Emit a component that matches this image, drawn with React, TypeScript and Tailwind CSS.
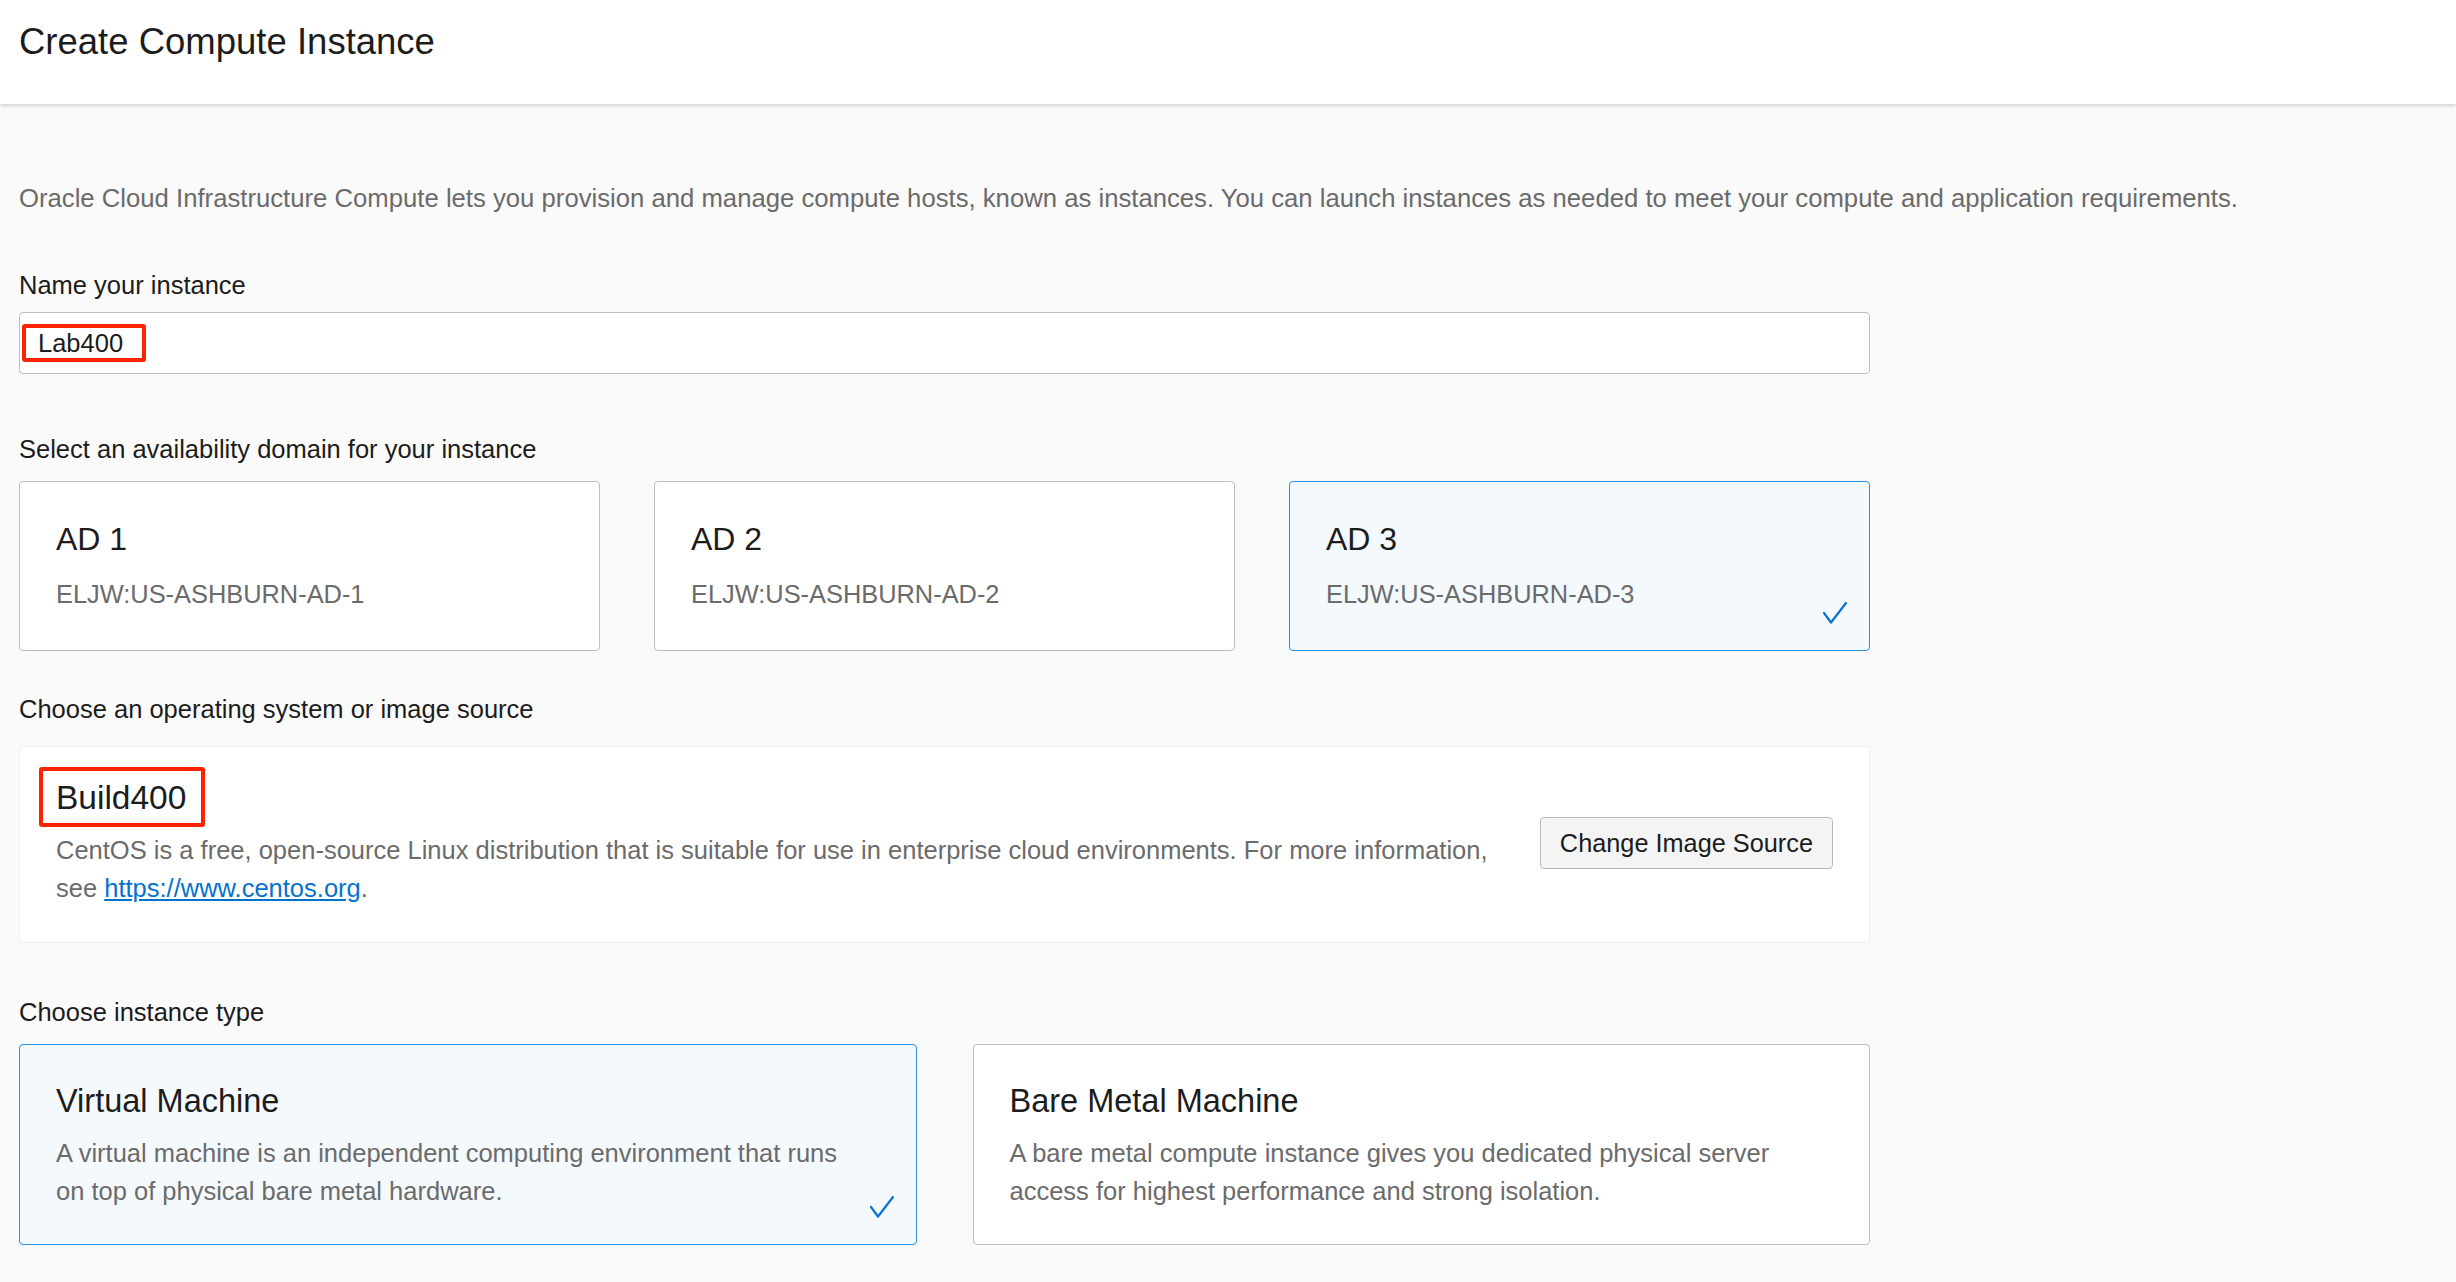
import React from "react";

const Check = () => (
  <svg width="24" height="22" viewBox="0 0 24 22" fill="none" className="absolute right-[22px] bottom-[26px]">
    <polyline points="1,11 8,20.5 23,1" stroke="#0a72cf" strokeWidth="2.2" strokeLinecap="round" strokeLinejoin="round" />
  </svg>
);

function AdCard({ title, sub, selected }: { title: string; sub: string; selected?: boolean }) {
  return (
    <div
      className={
        selected
          ? "relative h-[170px] rounded-[4px] border border-[#2490e6] bg-[#f4f9fe] pl-[36px] pt-[38px]"
          : "relative h-[170px] rounded-[4px] border border-[#b9bec7] bg-white pl-[36px] pt-[38px]"
      }
    >
      <div className="text-[32px] leading-[38px] text-[#1c1c1c]">{title}</div>
      <div className="mt-[21px] text-[25.4px] leading-[30px] text-[#6b6b6b]">{sub}</div>
      {selected && <Check />}
    </div>
  );
}

function TypeCard({ title, desc, selected }: { title: string; desc: string; selected?: boolean }) {
  return (
    <div
      className={
        selected
          ? "relative h-[201px] rounded-[4px] border border-[#2490e6] bg-[#f4f9fe] pl-[36px] pr-[36px] pt-[37px]"
          : "relative h-[201px] rounded-[4px] border border-[#b9bec7] bg-white pl-[36px] pr-[36px] pt-[37px]"
      }
    >
      <div className="text-[32.5px] leading-[38px] text-[#1c1c1c]">{title}</div>
      <div className="mt-[14px] w-[810px] text-[25.5px] leading-[38px] text-[#6b6b6b]">{desc}</div>
      {selected && <Check />}
    </div>
  );
}

export default function App() {
  return (
    <div
      className="min-h-[1282px] w-full bg-[#fafafa] text-[#1c1c1c]"
      style={{ fontFamily: '"Liberation Sans", Arial, Helvetica, sans-serif' }}
    >
      <header className="relative z-10 h-[104px] bg-white pl-[19px] pt-[22px] shadow-[0_2px_4px_rgba(0,0,0,0.16)]">
        <h1 className="text-[36.5px] leading-[40px] text-[#1c1c1c]">Create Compute Instance</h1>
      </header>

      <main className="px-[19px] pt-[79px]">
        <p className="whitespace-nowrap text-[25.7px] leading-[30px] text-[#6b6b6b]">
          Oracle Cloud Infrastructure Compute lets you provision and manage compute hosts, known as instances. You can launch instances as needed to meet your compute and application requirements.
        </p>

        <div className="w-[1851px]">
          <div className="mt-[57px] text-[25.5px] leading-[30px]">Name your instance</div>
          <div className="mt-[12px] flex h-[62px] items-center rounded-[4px] border border-[#b9bec7] bg-white pl-[2px]">
            <span className="rounded-[3px] border-[4px] border-[#ff2200] pl-[12px] pr-[19px] text-[25.5px] leading-[30px] text-[#1c1c1c]">
              Lab400
            </span>
          </div>

          <div className="mt-[60px] text-[25.5px] leading-[30px]">Select an availability domain for your instance</div>
          <div className="mt-[17px] grid grid-cols-3 gap-[54px]">
            <AdCard title="AD 1" sub="ELJW:US-ASHBURN-AD-1" />
            <AdCard title="AD 2" sub="ELJW:US-ASHBURN-AD-2" />
            <AdCard title="AD 3" sub="ELJW:US-ASHBURN-AD-3" selected />
          </div>

          <div className="mt-[43px] text-[25.5px] leading-[30px]">Choose an operating system or image source</div>
          <div className="mt-[22px] flex h-[197px] items-start justify-between rounded-[4px] border border-[#efefef] bg-white pl-[36px] pr-[36px] pt-[20px]">
            <div className="w-[1470px]">
              <div className="-ml-[17px] inline-block h-[60px] rounded-[3px] border-[4px] border-[#ff2200] pl-[13px] pr-[15px] pt-[7px] text-[33.5px] leading-[40px] text-[#1c1c1c]">
                Build400
              </div>
              <div className="mt-[4px] text-[25.5px] leading-[38px] text-[#6b6b6b]">
                <div>
                  CentOS is a free, open-source Linux distribution that is suitable for use in enterprise cloud environments. For more information,
                </div>
                <div>
                  <span>see </span>
                  <a href="#" className="text-[#0572ce] underline">
                    https://www.centos.org
                  </a>
                  <span>.</span>
                </div>
              </div>
            </div>
            <button className="mt-[50px] h-[52px] rounded-[4px] border border-[#b5bac3] bg-[#f4f4f5] px-[19px] text-[25.3px] leading-[30px] text-[#1c1c1c]">
              Change Image Source
            </button>
          </div>

          <div className="mt-[54px] text-[25.5px] leading-[30px]">Choose instance type</div>
          <div className="mt-[17px] grid grid-cols-2 gap-[56px]">
            <TypeCard
              title="Virtual Machine"
              desc="A virtual machine is an independent computing environment that runs on top of physical bare metal hardware."
              selected
            />
            <TypeCard
              title="Bare Metal Machine"
              desc="A bare metal compute instance gives you dedicated physical server access for highest performance and strong isolation."
            />
          </div>
        </div>
      </main>
    </div>
  );
}
